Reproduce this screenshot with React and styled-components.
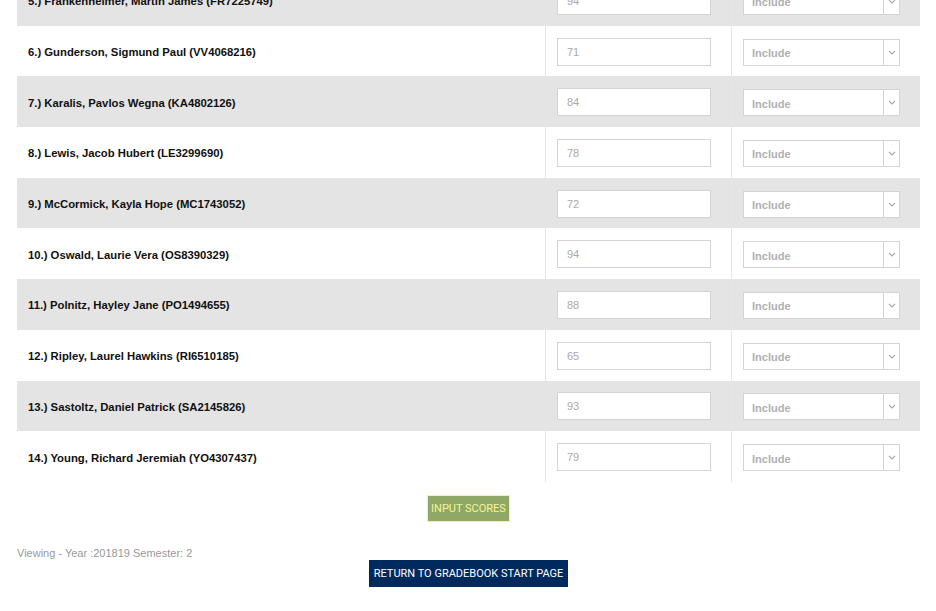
import React from 'react';
import styled, { createGlobalStyle } from 'styled-components';

const GlobalStyle = createGlobalStyle`
  html, body {
    margin: 0;
    padding: 0;
    background: #fff;
    font-family: "Liberation Sans", Arial, sans-serif;
    overflow: hidden;
  }
`;

const students = [
  { name: '5.) Frankenheimer, Martin James (FR7225749)', score: 94 },
  { name: '6.) Gunderson, Sigmund Paul (VV4068216)', score: 71 },
  { name: '7.) Karalis, Pavlos Wegna (KA4802126)', score: 84 },
  { name: '8.) Lewis, Jacob Hubert (LE3299690)', score: 78 },
  { name: '9.) McCormick, Kayla Hope (MC1743052)', score: 72 },
  { name: '10.) Oswald, Laurie Vera (OS8390329)', score: 94 },
  { name: '11.) Polnitz, Hayley Jane (PO1494655)', score: 88 },
  { name: '12.) Ripley, Laurel Hawkins (RI6510185)', score: 65 },
  { name: '13.) Sastoltz, Daniel Patrick (SA2145826)', score: 93 },
  { name: '14.) Young, Richard Jeremiah (YO4307437)', score: 79 },
];

const App = () => {
  return (
    <Page>
      <GlobalStyle />
      <Table>
        {students.map((s, i) => (
          <Row key={s.name} shaded={i % 2 === 0}>
            <NameCell>{s.name}</NameCell>
            <Cell>
              <ScoreInput defaultValue={s.score} />
            </Cell>
            <Cell>
              <Select>
                <SelectText>Include</SelectText>
                <SelectArrow>
                  <svg width="8" height="5" viewBox="0 0 8 5">
                    <path d="M1 1l3 3 3-3" fill="none" stroke="#aaa" strokeWidth="1.1" />
                  </svg>
                </SelectArrow>
              </Select>
            </Cell>
          </Row>
        ))}
      </Table>
      <Actions>
        <InputButton>INPUT SCORES</InputButton>
      </Actions>
      <Viewing>Viewing - Year :201819 Semester: 2</Viewing>
      <Actions>
        <ReturnButton>RETURN TO GRADEBOOK START PAGE</ReturnButton>
      </Actions>
    </Page>
  );
};

export default App;

const Page = styled.div`
  padding: 0 16px 0 17px;
`;

const Table = styled.div`
  margin-top: -25px;
  width: 903px;
`;

const Row = styled.div`
  box-sizing: border-box;
  display: grid;
  grid-template-columns: 528px 186px 189px;
  height: 50.7px;
  padding-top: 2px;
  background: ${props => (props.shaded ? '#e4e4e4' : '#fff')};
`;

const NameCell = styled.div`
  display: flex;
  align-items: center;
  padding-left: 11px;
  font-size: 11.3px;
  font-weight: bold;
  color: #111;
`;

const Cell = styled.div`
  display: flex;
  align-items: center;
  padding-left: 11px;
  border-left: 1px solid #e6e6e6;
  margin-top: -2px;
  padding-top: 2px;
`;

const ScoreInput = styled.input`
  box-sizing: border-box;
  width: 154px;
  height: 28px;
  padding: 0 9px;
  border: 1px solid #d4d4d4;
  background: #fff;
  font-family: "Liberation Sans", Arial, sans-serif;
  font-size: 11px;
  color: #aaa;
  outline: none;
  margin-top: -1px;
`;

const Select = styled.div`
  box-sizing: border-box;
  display: flex;
  width: 157px;
  height: 27px;
  border: 1px solid #d4d4d4;
  background: #fff;
`;

const SelectText = styled.div`
  flex: 1;
  display: flex;
  align-items: center;
  padding: 2px 0 0 8px;
  font-size: 11px;
  font-weight: bold;
  color: #b0b0b0;
`;

const SelectArrow = styled.div`
  width: 15px;
  display: flex;
  align-items: center;
  justify-content: center;
  border-left: 1px solid #d4d4d4;
`;

const Actions = styled.div`
  display: flex;
  justify-content: center;
  width: 903px;
`;

const InputButton = styled.button`
  margin-top: 13px;
  height: 27px;
  padding: 0 3px;
  border: 1px solid #f3f59a;
  background: #90a865;
  color: #f5f59a;
  font-family: Roboto, "Liberation Sans", sans-serif;
  font-size: 11px;
`;

const Viewing = styled.div`
  margin-top: 24px;
  height: 14px;
  font-size: 11px;
  line-height: 14px;
  color: #999;
`;

const ReturnButton = styled.button`
  height: 27px;
  padding: 0 5px;
  border: none;
  background: #002a5e;
  color: #fff;
  font-family: Roboto, "Liberation Sans", sans-serif;
  font-size: 11px;
`;
